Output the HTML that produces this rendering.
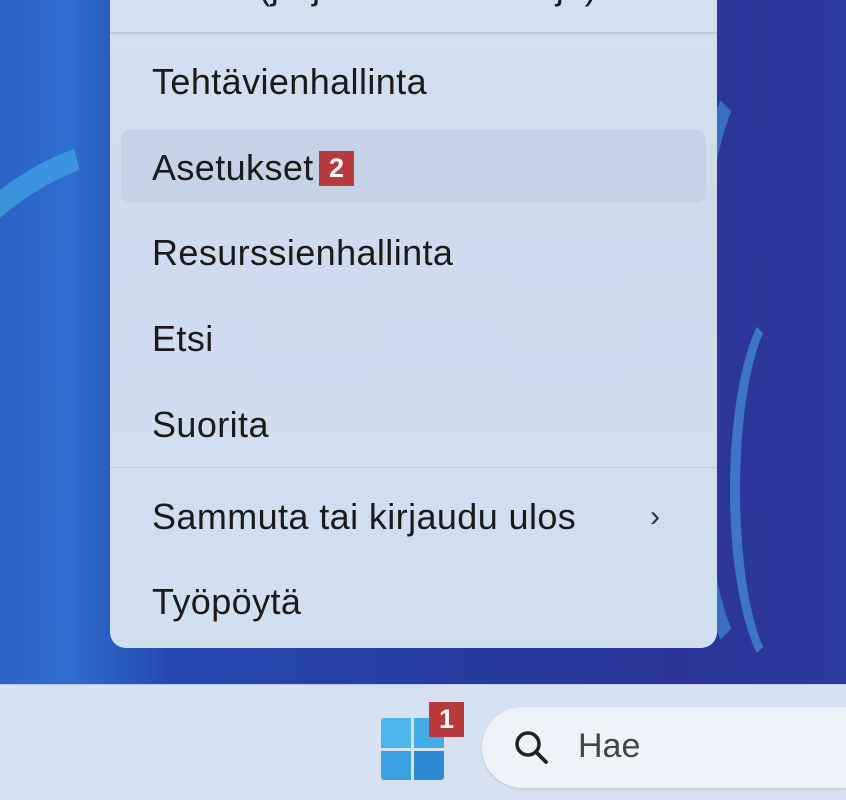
<!DOCTYPE html>
<html><head><meta charset="utf-8"><style>
*{margin:0;padding:0;box-sizing:border-box}
html,body{width:846px;height:800px;overflow:hidden}
body{position:relative;font-family:"Liberation Sans",sans-serif;}
.wrap{position:absolute;left:0;top:0;width:846px;height:800px;overflow:hidden;
background:linear-gradient(90deg,#2b63c2 0%,#2f6ed0 8%,#2a5fc0 13%,#2548b0 20%,#283a9e 60%,#2b3496 80%,#2d3a9f 100%);}
.sw{position:absolute;border-radius:50%;}
.menu{position:absolute;left:110px;top:-20px;width:607px;height:668px;border-radius:0 0 16px 16px;
background:linear-gradient(180deg,#d3e1f1 0%,#cfdbee 40%,#d1e0f1 100%);}
.item{position:absolute;left:42px;font-size:36px;color:#1a1a1a;letter-spacing:0.4px;white-space:nowrap}
.sep{position:absolute;left:0;right:0;height:2px;background:#bfcbdc;}
.hl{position:absolute;left:11px;width:585px;top:150px;height:73px;border-radius:9px;background:#c6d2e6;}
.badge{position:absolute;width:35px;height:35px;background:#b83a3c;color:#fff;font-weight:bold;font-size:27px;text-align:center;line-height:35px;}
.task{position:absolute;left:0;top:684px;width:846px;height:116px;background:#d6e2f1;border-top:1px solid #b8c8de;}
.search{position:absolute;left:482px;top:707px;width:364px;height:81px;border-radius:41px 0 0 41px;background:#eef3f9;box-shadow:0 1px 2px #b5c2d3;}
</style></head><body><div class="wrap">
<div class="sw" style="left:-120px;top:120px;width:420px;height:560px;border:22px solid #4aa8e6;border-color:transparent transparent transparent #3f9fe2;transform:rotate(30deg);opacity:.8"></div>
<div class="sw" style="left:680px;top:60px;width:160px;height:620px;border:18px solid #3f86d6;border-color:transparent transparent transparent #3f86d6;opacity:.7"></div>
<div class="sw" style="left:730px;top:300px;width:110px;height:380px;border:10px solid #4aa0e6;border-color:transparent transparent transparent #4aa0e6;opacity:.6"></div>
<div class="menu">
 <div class="item" style="top:-14px">Pääte (järjestelmänvalvoja)</div>
 <div class="sep" style="top:52px"></div>
 <div class="item" style="top:81px">Tehtävienhallinta</div>
 <div class="hl"></div>
 <div class="item" style="top:167px">Asetukset</div>
 <div class="item" style="top:252px">Resurssienhallinta</div>
 <div class="item" style="top:338px">Etsi</div>
 <div class="item" style="top:424px">Suorita</div>
 <div class="sep" style="top:487px;height:1px"></div>
 <div class="item" style="top:516px">Sammuta tai kirjaudu ulos</div>
 <div style="position:absolute;left:540px;top:520px;font-size:30px;color:#333">›</div>
 <div class="item" style="top:601px">Työpöytä</div>
</div>
<div class="badge" style="left:319px;top:151px">2</div>
<div class="task"></div>
<div style="position:absolute;left:381px;top:718px;width:63px;height:62px;">
 <div style="position:absolute;left:0;top:0;width:30px;height:30px;background:#4cb6ea;border-radius:3px 0 0 0"></div>
 <div style="position:absolute;left:33px;top:0;width:30px;height:30px;background:#42ace6;border-radius:0 3px 0 0"></div>
 <div style="position:absolute;left:0;top:33px;width:30px;height:29px;background:#3aa0e0;border-radius:0 0 0 3px"></div>
 <div style="position:absolute;left:33px;top:33px;width:30px;height:29px;background:#2f8ad6;border-radius:0 0 3px 0"></div>
</div>
<div class="badge" style="left:429px;top:702px">1</div>
<div class="search">
 <svg style="position:absolute;left:30px;top:21px" width="40" height="40" viewBox="0 0 40 40"><circle cx="16" cy="16" r="11" fill="none" stroke="#222" stroke-width="3.5"/><line x1="24" y1="24" x2="34" y2="34" stroke="#222" stroke-width="3.8" stroke-linecap="round"/></svg>
 <div style="position:absolute;left:96px;top:20px;font-size:34px;color:#444">Hae</div>
</div>
</div></body></html>
